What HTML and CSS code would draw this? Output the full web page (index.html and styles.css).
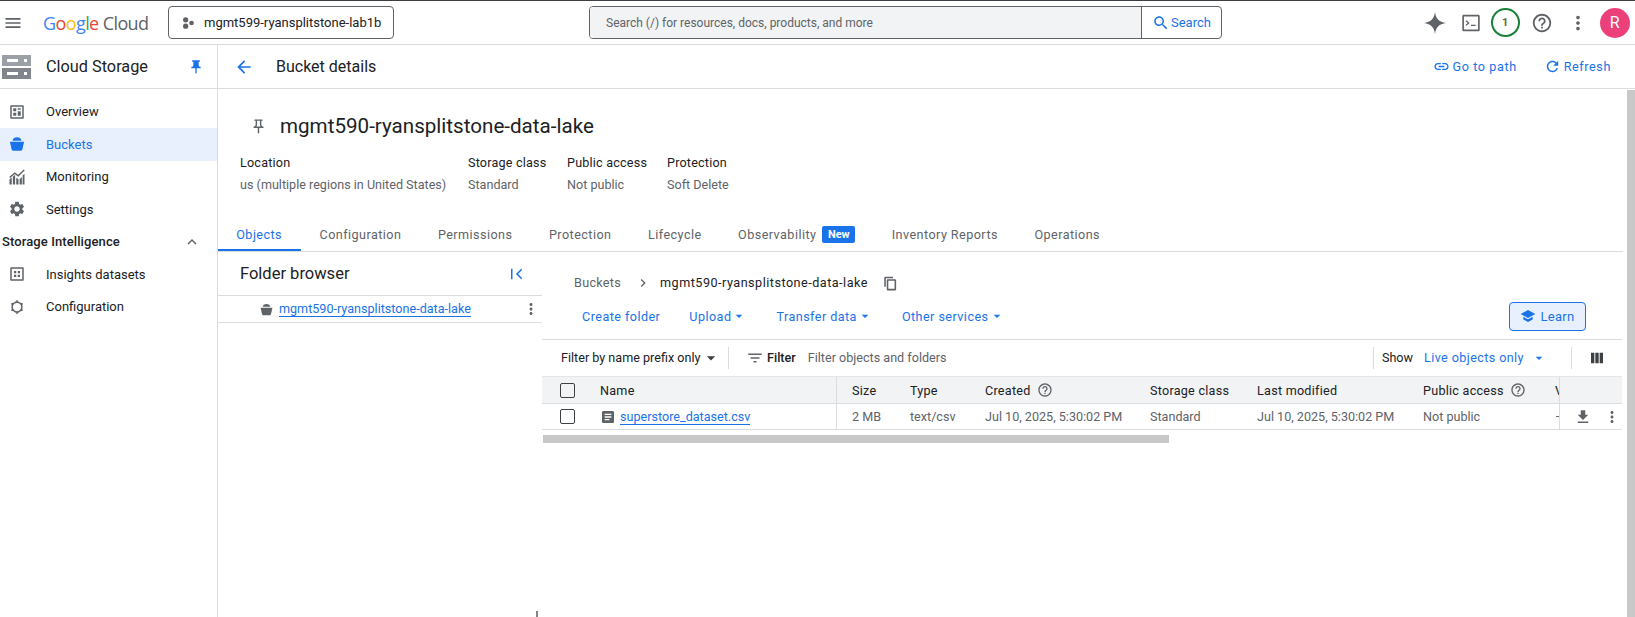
FILE: index.html

```html
<!DOCTYPE html>
<html lang="en">
<head>
  <meta charset="UTF-8" />
  <title>Bucket details - Cloud Storage</title>
  <link rel="stylesheet" href="styles.css">
</head>
<body>
  <svg class="sprite" xmlns="http://www.w3.org/2000/svg">
    <symbol id="i-menu" viewBox="0 0 24 24"><path d="M3 18h18v-2H3v2zm0-5h18v-2H3v2zm0-7v2h18V6H3z"/></symbol>
    <symbol id="i-pin" viewBox="0 0 24 24"><path d="M16 9V4h1c.55 0 1-.45 1-1s-.45-1-1-1H7c-.55 0-1 .45-1 1s.45 1 1 1h1v5c0 1.66-1.34 3-3 3v2h5.97v7l1 1 1-1v-7H19v-2c-1.66 0-3-1.34-3-3z"/></symbol>
    <symbol id="i-pin-line" viewBox="0 0 24 24"><path d="M14 4v5c0 1.12.37 2.16 1 3H9c.65-.86 1-1.9 1-3V4h4m3-2H7c-.55 0-1 .45-1 1s.45 1 1 1h1v5c0 1.66-1.34 3-3 3v2h5.97v7l1 1 1-1v-7H19v-2c-1.66 0-3-1.34-3-3V4h1c.55 0 1-.45 1-1s-.45-1-1-1z"/></symbol>
    <symbol id="i-back" viewBox="0 0 24 24"><path d="M20 11H7.83l5.59-5.59L12 4l-8 8 8 8 1.41-1.41L7.83 13H20v-2z"/></symbol>
    <symbol id="i-search" viewBox="0 0 24 24"><path d="M15.5 14h-.79l-.28-.27C15.41 12.59 16 11.11 16 9.5 16 5.91 13.09 3 9.5 3S3 5.91 3 9.5 5.91 16 9.5 16c1.61 0 3.09-.59 4.23-1.57l.27.28v.79l5 4.99L20.49 19l-4.99-5zm-6 0C7.01 14 5 11.99 5 9.5S7.01 5 9.5 5 14 7.01 14 9.5 11.99 14 9.5 14z"/></symbol>
    <symbol id="i-help" viewBox="0 0 24 24"><path d="M11 18h2v-2h-2v2zm1-16C6.48 2 2 6.48 2 12s4.48 10 10 10 10-4.48 10-10S17.52 2 12 2zm0 18c-4.41 0-8-3.59-8-8s3.59-8 8-8 8 3.59 8 8-3.59 8-8 8zm0-14c-2.21 0-4 1.79-4 4h2c0-1.1.9-2 2-2s2 .9 2 2c0 2-3 1.75-3 5h2c0-2.25 3-2.5 3-5 0-2.21-1.79-4-4-4z"/></symbol>
    <symbol id="i-more" viewBox="0 0 24 24"><path d="M12 8c1.1 0 2-.9 2-2s-.9-2-2-2-2 .9-2 2 .9 2 2 2zm0 2c-1.1 0-2 .9-2 2s.9 2 2 2 2-.9 2-2-.9-2-2-2zm0 6c-1.1 0-2 .9-2 2s.9 2 2 2 2-.9 2-2-.9-2-2-2z"/></symbol>
    <symbol id="i-link" viewBox="0 0 24 24"><path d="M3.9 12c0-1.71 1.39-3.1 3.1-3.1h4V7H7c-2.76 0-5 2.24-5 5s2.24 5 5 5h4v-1.9H7c-1.71 0-3.1-1.39-3.1-3.1zM8 13h8v-2H8v2zm9-6h-4v1.9h4c1.71 0 3.1 1.39 3.1 3.1s-1.39 3.1-3.1 3.1h-4V17h4c2.76 0 5-2.24 5-5s-2.24-5-5-5z"/></symbol>
    <symbol id="i-refresh" viewBox="0 0 24 24"><path d="M17.65 6.35C16.2 4.9 14.21 4 12 4c-4.42 0-7.99 3.58-7.99 8s3.57 8 7.99 8c3.73 0 6.84-2.55 7.73-6h-2.08c-.82 2.33-3.04 4-5.65 4-3.31 0-6-2.69-6-6s2.69-6 6-6c1.66 0 3.14.69 4.22 1.78L13 11h7V4l-2.35 2.35z"/></symbol>
    <symbol id="i-settings" viewBox="0 0 24 24"><path d="M19.14 12.94c.04-.3.06-.61.06-.94 0-.32-.02-.64-.07-.94l2.03-1.58c.18-.14.23-.41.12-.61l-1.92-3.32c-.12-.22-.37-.29-.59-.22l-2.39.96c-.5-.38-1.03-.7-1.62-.94l-.36-2.54c-.04-.24-.24-.41-.48-.41h-3.84c-.24 0-.43.17-.47.41l-.36 2.54c-.59.24-1.13.57-1.62.94l-2.39-.96c-.22-.08-.47 0-.59.22L2.74 8.87c-.12.21-.08.47.12.61l2.03 1.58c-.05.3-.09.63-.09.94s.02.64.07.94l-2.03 1.58c-.18.14-.23.41-.12.61l1.92 3.32c.12.22.37.29.59.22l2.39-.96c.5.38 1.03.7 1.62.94l.36 2.54c.05.24.24.41.48.41h3.84c.24 0 .44-.17.47-.41l.36-2.54c.59-.24 1.13-.56 1.62-.94l2.39.96c.22.08.47 0 .59-.22l1.92-3.32c.12-.22.07-.47-.12-.61l-2.01-1.58zM12 15.6c-1.98 0-3.6-1.62-3.6-3.6s1.62-3.6 3.6-3.6 3.6 1.62 3.6 3.6-1.62 3.6-3.6 3.6z"/></symbol>
    <symbol id="i-config" viewBox="0 0 24 24"><path fill-rule="evenodd" d="M12 4.500a7.500 7.500 0 1 1 0 15 7.500 7.500 0 0 1 0-15zM12 6.500a5.500 5.500 0 1 0 0 11 5.500 5.500 0 0 0 0-11z"/><path d="M12 2.500l2.500 2.500h-5zM12 21.500l-2.500-2.500h5zM3.800 7.200l3.400-.9-1.300 4.200zM20.200 7.200l-3.400-.9 1.300 4.200zM3.800 16.800l3.400.9-1.300-4.200zM20.200 16.800l-3.400.9 1.300-4.200z"/></symbol>
    <symbol id="i-copy" viewBox="0 0 24 24"><path d="M16 1H4c-1.100 0-2 .9-2 2v14h2.500V3.500H16V1zm3 4H8c-1.100 0-2 .9-2 2v14c0 1.100.9 2 2 2h11c1.100 0 2-.9 2-2V7c0-1.100-.9-2-2-2zm-.5 15.500h-10v-13h10v13z"/></symbol>
    <symbol id="i-download" viewBox="0 0 24 24"><path d="M19 9h-4V3H9v6H5l7 7 7-7zM5 18v2h14v-2H5z"/></symbol>
    <symbol id="i-filter" viewBox="0 0 24 24"><path d="M10 18h4v-2h-4v2zM3 6v2h18V6H3zm3 7h12v-2H6v2z"/></symbol>
    <symbol id="i-school" viewBox="0 0 24 24"><path d="M5 13.180v4L12 21l7-3.820v-4L12 17l-7-3.820zM12 3L1 9l11 6 11-6L12 3z"/></symbol>
    <symbol id="i-columns" viewBox="0 0 24 24"><path d="M3 4h5v16H3zM9.500 4h5v16h-5zM16 4h5v16h-5z"/></symbol>
    <symbol id="i-less" viewBox="0 0 24 24"><path d="M12 8l-6 6 1.410 1.410L12 10.830l4.590 4.580L18 14z"/></symbol>
    <symbol id="i-file" viewBox="0 0 24 24"><path d="M19 3H5c-1.100 0-2 .9-2 2v14c0 1.100.9 2 2 2h14c1.100 0 2-.9 2-2V5c0-1.100-.9-2-2-2zm-5 14H7v-2h7v2zm3-4H7v-2h10v2zm0-4H7V7h10v2z"/></symbol>
    <symbol id="i-bucket" viewBox="0 0 24 24"><path d="M6 7.500C6.600 4.500 8.500 3 12 3s5.400 1.500 6 4.500zM2.500 9h19l-2.300 10c-.3 1.300-1.200 2-2.400 2H7.200c-1.200 0-2.100-.7-2.400-2z"/></symbol>
    <symbol id="i-overview" viewBox="0 0 24 24"><path d="M4 3h16c.6 0 1 .4 1 1v16c0 .6-.4 1-1 1H4c-.6 0-1-.4-1-1V4c0-.6.4-1 1-1zm1 2v14h14V5H5zm2 2h4v4H7zm6 0h4v2h-4zm0 4h4v6h-4zm-6 2h4v4H7z" fill-rule="evenodd"/></symbol>
    <symbol id="i-monitor" viewBox="0 0 24 24"><path d="M2 22v-7l3-2.500V22zm4.500 0V11.500l3-2.500v13zm4.500 0v-9l3 2v7zm4.500 0v-7l3-3v10zm4 0V10l2.500-2.500V22zM1.500 12L9 5.500l4.500 3.500 7.500-7 1.300 1.300-8.700 8.200L9 8 3 13.300z"/></symbol>
    <symbol id="i-insights" viewBox="0 0 24 24"><path d="M4 3h16c.6 0 1 .4 1 1v16c0 .6-.4 1-1 1H4c-.6 0-1-.4-1-1V4c0-.6.4-1 1-1zm1 2v14h14V5H5zm3 3h3v3H8zm5 0h3v3h-3zm-5 5h3v3H8zm5 0h3v3h-3z" fill-rule="evenodd"/></symbol>
    <symbol id="i-spark" viewBox="0 0 24 24"><path d="M12 1c.9 6.800 4.200 10.100 11 11-6.800.9-10.100 4.200-11 11-.9-6.800-4.200-10.100-11-11 6.800-.9 10.100-4.200 11-11z"/></symbol>
    <symbol id="i-terminal" viewBox="0 0 24 24"><path d="M4 3h16c.8 0 1.500.7 1.500 1.500v15c0 .8-.7 1.500-1.500 1.500H4c-.8 0-1.500-.7-1.500-1.500v-15C2.500 3.700 3.200 3 4 3zm.3 1.800v14.400h15.400V4.800zM7 9l3.500 3L7 15l-.9-1 2.300-2-2.300-2zm5 5h5v1.400h-5z" fill-rule="evenodd"/></symbol>
    <symbol id="i-project" viewBox="0 0 24 24"><circle cx="8" cy="6.500" r="4.500"/><circle cx="8" cy="17.500" r="4.500"/><circle cx="18" cy="12" r="4"/></symbol>
    <symbol id="i-collapse" viewBox="0 0 24 24"><path d="M4 5h2v14H4zM19 6.400L17.600 5l-7 7 7 7 1.400-1.400L13.400 12z"/></symbol>
    <symbol id="i-caret" viewBox="0 0 24 24"><path d="M7 10l5 5 5-5z"/></symbol>
  </svg>

  <header class="topbar">
    <svg class="icon icon-menu"><use href="#i-menu"/></svg>
    <div class="logo"><span class="g-blue">G</span><span class="g-red">o</span><span class="g-yellow">o</span><span class="g-blue">g</span><span class="g-green">l</span><span class="g-red">e</span> <span class="logo-cloud">Cloud</span></div>
    <button class="project-btn"><svg class="icon icon-project"><use href="#i-project"/></svg>mgmt599-ryansplitstone-lab1b</button>
    <div class="searchbox">
      <div class="search-input">Search (/) for resources, docs, products, and more</div>
      <div class="search-btn"><svg class="icon icon-search"><use href="#i-search"/></svg>Search</div>
    </div>
    <div class="top-icons">
      <svg class="icon icon-spark"><use href="#i-spark"/></svg>
      <svg class="icon top-icon icon-term"><use href="#i-terminal"/></svg>
      <div class="notif"><span>1</span></div>
      <svg class="icon top-icon"><use href="#i-help"/></svg>
      <svg class="icon top-icon"><use href="#i-more"/></svg>
      <div class="avatar">R</div>
    </div>
  </header>

  <div class="layout">
    <aside class="sidebar">
      <div class="side-head">
        <svg class="storage-logo" viewBox="0 0 29 24">
          <rect x="0" y="0" width="29" height="11" fill="#9aa0a6"/>
          <rect x="0" y="13" width="29" height="11" fill="#80868b"/>
          <rect x="5" y="4" width="11" height="3" fill="#fff"/>
          <rect x="22" y="4" width="3" height="3" fill="#fff"/>
          <rect x="5" y="17" width="11" height="3" fill="#fff"/>
          <rect x="22" y="17" width="3" height="3" fill="#fff"/>
        </svg>
        <span class="side-title">Cloud Storage</span>
        <svg class="icon icon-sidepin"><use href="#i-pin"/></svg>
      </div>
      <nav class="side-nav">
        <a class="nav-item"><svg class="icon"><use href="#i-overview"/></svg>Overview</a>
        <a class="nav-item active"><svg class="icon"><use href="#i-bucket"/></svg>Buckets</a>
        <a class="nav-item"><svg class="icon"><use href="#i-monitor"/></svg>Monitoring</a>
        <a class="nav-item"><svg class="icon"><use href="#i-settings"/></svg>Settings</a>
        <div class="nav-group">Storage Intelligence<svg class="icon"><use href="#i-less"/></svg></div>
        <a class="nav-item"><svg class="icon"><use href="#i-insights"/></svg>Insights datasets</a>
        <a class="nav-item"><svg class="icon"><use href="#i-config"/></svg>Configuration</a>
      </nav>
    </aside>

    <div class="main">
      <div class="page-head">
        <svg class="icon icon-back"><use href="#i-back"/></svg>
        <span class="page-title">Bucket details</span>
        <a class="head-link"><svg class="icon"><use href="#i-link"/></svg>Go to path</a>
        <a class="head-link"><svg class="icon"><use href="#i-refresh"/></svg>Refresh</a>
      </div>

      <div class="main-body">
        <div class="content">
          <div class="bucket-title">
            <svg class="icon"><use href="#i-pin-line"/></svg>
            <h1>mgmt590-ryansplitstone-data-lake</h1>
          </div>
          <div class="meta">
            <div class="meta-col meta-location"><b>Location</b><span>us (multiple regions in United States)</span></div>
            <div class="meta-col meta-class"><b>Storage class</b><span>Standard</span></div>
            <div class="meta-col meta-access"><b>Public access</b><span>Not public</span></div>
            <div class="meta-col"><b>Protection</b><span>Soft Delete</span></div>
          </div>

          <div class="tabs">
            <a class="tab active">Objects</a>
            <a class="tab">Configuration</a>
            <a class="tab">Permissions</a>
            <a class="tab">Protection</a>
            <a class="tab">Lifecycle</a>
            <a class="tab">Observability<span class="badge">New</span></a>
            <a class="tab">Inventory Reports</a>
            <a class="tab">Operations</a>
          </div>

          <div class="browser">
            <div class="folders">
              <div class="folders-head">
                <span>Folder browser</span>
                <svg class="icon"><use href="#i-collapse"/></svg>
              </div>
              <div class="folder-row">
                <svg class="icon icon-bucket"><use href="#i-bucket"/></svg>
                <a class="link">mgmt590-ryansplitstone-data-lake</a>
                <svg class="icon icon-more"><use href="#i-more"/></svg>
              </div>
            </div>

            <div class="objects">
              <div class="crumbs">
                <span class="crumb-root">Buckets</span>
                <svg class="crumb-sep" viewBox="0 0 24 24"><path d="M8.590 16.590L13.170 12 8.590 7.410 10 6l6 6-6 6z"/></svg>
                <span class="crumb-name">mgmt590-ryansplitstone-data-lake</span>
                <svg class="icon icon-copy"><use href="#i-copy"/></svg>
              </div>

              <div class="actions">
                <a class="action">Create folder</a>
                <a class="action">Upload<svg class="caret"><use href="#i-caret"/></svg></a>
                <a class="action">Transfer data<svg class="caret"><use href="#i-caret"/></svg></a>
                <a class="action">Other services<svg class="caret"><use href="#i-caret"/></svg></a>
                <button class="learn"><svg class="icon"><use href="#i-school"/></svg>Learn</button>
              </div>

              <div class="filters">
                <span class="prefix">Filter by name prefix only<svg class="caret caret-big"><use href="#i-caret"/></svg></span>
                <svg class="icon icon-filter"><use href="#i-filter"/></svg>
                <b class="filter-label">Filter</b>
                <span class="filter-hint">Filter objects and folders</span>
                <span class="show">Show</span>
                <span class="live">Live objects only<svg class="caret"><use href="#i-caret"/></svg></span>
                <svg class="icon icon-columns"><use href="#i-columns"/></svg>
              </div>

              <div class="tbl-row tbl-head">
                <div class="cell-check"><span class="checkbox"></span></div>
                <div class="cell cell-name">Name</div>
                <div class="cell">Size</div>
                <div class="cell">Type</div>
                <div class="cell">Created<svg class="icon icon-tip"><use href="#i-help"/></svg></div>
                <div class="cell">Storage class</div>
                <div class="cell">Last modified</div>
                <div class="cell">Public access<svg class="icon icon-tip"><use href="#i-help"/></svg></div>
                <div class="cell cell-clip">V</div>
                <div class="cell-actions"></div>
              </div>
              <div class="tbl-row tbl-data">
                <div class="cell-check"><span class="checkbox"></span></div>
                <div class="cell cell-name"><svg class="icon icon-file"><use href="#i-file"/></svg><a class="link">superstore_dataset.csv</a></div>
                <div class="cell">2 MB</div>
                <div class="cell">text/csv</div>
                <div class="cell">Jul 10, 2025, 5:30:02 PM</div>
                <div class="cell">Standard</div>
                <div class="cell">Jul 10, 2025, 5:30:02 PM</div>
                <div class="cell">Not public</div>
                <div class="cell cell-clip">–</div>
                <div class="cell-actions">
                  <svg class="icon"><use href="#i-download"/></svg>
                  <svg class="icon"><use href="#i-more"/></svg>
                </div>
              </div>
              <div class="hscroll"></div>
            </div>
          </div>
        </div>
        <div class="vscroll"></div>
      </div>
    </div>
  </div>
  <div class="text-cursor"></div>
</body>
</html>
```

FILE: styles.css

```css
html, body {
  margin: 0;
  padding: 0;
  height: 100%;
  overflow: hidden;
  background: #fff;
  color: #202124;
  font-family: Roboto, Arial, sans-serif;
  font-size: 12.6px;
  white-space: nowrap;
}

.sprite {
  display: none;
}

.icon {
  width: 18px;
  height: 18px;
  fill: #5f6368;
  flex: none;
}

.caret {
  width: 16px;
  height: 16px;
  fill: currentColor;
  flex: none;
}

.link {
  color: #1a73e8;
  border-bottom: 1px solid #1a73e8;
}

/* top bar */
.topbar {
  display: flex;
  align-items: center;
  height: 43px;
  border-top: 1px solid #3c4043;
  border-bottom: 1px solid #dadce0;
}

.icon-menu {
  width: 20px;
  height: 20px;
  margin-left: 3px;
}

.logo {
  width: 125px;
  margin-left: 20px;
  font-family: "Open Sans", sans-serif;
  font-size: 18px;
  letter-spacing: -0.6px;
}

.g-blue { color: #4285f4; }
.g-red { color: #ea4335; }
.g-yellow { color: #fbbc04; }
.g-green { color: #34a853; }
.logo-cloud { color: #5f6368; }

.project-btn {
  display: flex;
  align-items: center;
  gap: 9px;
  width: 226px;
  height: 33px;
  padding: 0 12px;
  background: #fff;
  border: 1px solid #5f6368;
  border-radius: 4px;
  color: #202124;
  font: 13px Roboto, Arial, sans-serif;
}

.icon-project {
  width: 14px;
  height: 14px;
}

.searchbox {
  display: flex;
  width: 633px;
  height: 33px;
  margin-left: 195px;
  border: 1px solid #5f6368;
  border-radius: 4px;
  box-sizing: border-box;
}

.search-input {
  flex: 1;
  display: flex;
  align-items: center;
  padding-left: 16px;
  background: #f1f3f4;
  border-radius: 3px 0 0 3px;
  color: #5f6368;
  font-size: 12px;
}

.search-btn {
  display: flex;
  align-items: center;
  gap: 1px;
  width: 80px;
  padding-left: 10px;
  box-sizing: border-box;
  border-left: 1px solid #5f6368;
  color: #1a73e8;
  font-size: 13px;
}

.icon-search {
  fill: #1a73e8;
}

.top-icons {
  display: grid;
  grid-auto-flow: column;
  grid-auto-columns: 36.5px;
  align-items: center;
  justify-items: center;
  margin-left: auto;
  margin-right: 2px;
}

.top-icon {
  width: 22px;
  height: 22px;
}

.icon-spark {
  width: 24px;
  height: 24px;
  margin-left: 6px;
}

.icon-term {
  margin-left: 4px;
}

.notif {
  display: flex;
  align-items: center;
  justify-content: center;
  width: 29px;
  height: 29px;
  box-sizing: border-box;
  border: 2px solid #188038;
  border-radius: 50%;
  font-size: 11px;
  font-weight: 700;
  color: #5f6b1e;
}

.avatar {
  display: flex;
  align-items: center;
  justify-content: center;
  width: 30px;
  height: 30px;
  border-radius: 50%;
  background: #ec407a;
  color: #fff;
  font-size: 16px;
}

/* layout */
.layout {
  display: flex;
  height: 572px;
}

.sidebar {
  width: 217px;
  flex: none;
  border-right: 1px solid #dadce0;
  font-size: 13px;
}

.side-head {
  display: flex;
  align-items: center;
  height: 43px;
  border-bottom: 1px solid #dadce0;
}

.storage-logo {
  width: 29px;
  height: 24px;
  margin-left: 2px;
}

.side-title {
  margin-left: 15px;
  font-size: 16.3px;
}

.icon-sidepin {
  width: 16px;
  height: 16px;
  margin-left: auto;
  margin-right: 13px;
  fill: #1a73e8;
}

.side-nav {
  padding-top: 6.6px;
}

.nav-item {
  display: flex;
  align-items: center;
  gap: 20px;
  height: 32.5px;
  padding-left: 8px;
}

.nav-item.active {
  background: #e8f0fe;
  color: #1a73e8;
}

.nav-item.active .icon {
  fill: #1a73e8;
}

.nav-group {
  display: flex;
  align-items: center;
  justify-content: space-between;
  height: 32.5px;
  padding: 0 16px 0 2px;
  font-weight: 500;
  letter-spacing: 0.1px;
}

.main {
  flex: 1;
  min-width: 0;
  display: flex;
  flex-direction: column;
}

.page-head {
  display: flex;
  align-items: center;
  flex: none;
  height: 43px;
  padding-right: 24px;
  border-bottom: 1px solid #dadce0;
}

.icon-back {
  width: 20px;
  height: 20px;
  margin-left: 16px;
  fill: #1a73e8;
}

.page-title {
  margin-left: 22px;
  margin-right: auto;
  font-size: 16px;
}

.head-link {
  display: flex;
  align-items: center;
  gap: 3px;
  margin-left: 27px;
  color: #1a73e8;
  letter-spacing: 0.6px;
}

.head-link .icon {
  width: 17px;
  height: 17px;
  fill: #1a73e8;
}

.main-body {
  flex: 1;
  display: flex;
  min-height: 0;
}

.content {
  width: 1405px;
  flex: none;
}

.vscroll {
  width: 8px;
  margin-left: 4px;
  margin-top: 1px;
  background: #c8c8c8;
}

/* bucket header */
.bucket-title {
  display: flex;
  align-items: center;
  gap: 13px;
  height: 26px;
  padding: 24px 0 0 32px;
}

.bucket-title .icon {
  width: 17px;
  height: 17px;
}

.bucket-title h1 {
  margin: 0;
  font-size: 20.6px;
  font-weight: 400;
}

.meta {
  display: flex;
  padding: 13px 0 0 22px;
}

.meta-col {
  display: flex;
  flex-direction: column;
  line-height: 21.5px;
}

.meta-col b {
  font-weight: 400;
  letter-spacing: 0.2px;
}

.meta-col span {
  color: #5f6368;
}

.meta-location { width: 228px; }
.meta-class { width: 99px; }
.meta-access { width: 100px; }

/* tabs */
.tabs {
  display: flex;
  align-items: stretch;
  height: 33px;
  margin-top: 23px;
  border-bottom: 1px solid #dadce0;
  letter-spacing: 0.45px;
  color: #5f6368;
}

.tab {
  display: flex;
  align-items: center;
  padding: 0 18.25px;
}

.tab.active {
  padding-right: 19.25px;
  color: #1a73e8;
  box-shadow: inset 0 -2px 0 #1a73e8;
}

.badge {
  margin-left: 6px;
  padding: 2px 5.5px;
  background: #1a73e8;
  border-radius: 2px;
  color: #fff;
  font-size: 11px;
  font-weight: 700;
  letter-spacing: 0;
}

/* folder browser */
.browser {
  display: flex;
}

.folders {
  width: 324px;
  flex: none;
}

.folders-head {
  display: flex;
  align-items: center;
  justify-content: space-between;
  height: 43px;
  padding: 0 16px 0 22px;
  border-bottom: 1px solid #dadce0;
  font-size: 16.5px;
}

.folders-head .icon {
  fill: #1a73e8;
}

.folder-row {
  display: flex;
  align-items: center;
  height: 26px;
  padding: 0 2px 0 41px;
  border-bottom: 1px solid #dadce0;
}

.icon-bucket {
  width: 15px;
  height: 15px;
  margin-right: 5px;
}

.icon-more {
  margin-left: auto;
}

/* objects panel */
.objects {
  width: 1080px;
  flex: none;
}

.crumbs {
  display: flex;
  align-items: center;
  height: 21px;
  padding: 20px 0 0 32px;
}

.crumb-root {
  color: #5f6368;
  letter-spacing: 0.3px;
}

.crumb-sep {
  width: 16px;
  height: 16px;
  margin: 0 9px 0 14px;
  fill: #5f6368;
}

.crumb-name {
  letter-spacing: 0.5px;
}

.icon-copy {
  width: 15px;
  height: 15px;
  margin-left: 15px;
  margin-top: 2px;
}

.actions {
  display: flex;
  align-items: center;
  height: 32px;
  margin-top: 7px;
  padding: 0 36px 7px 40px;
  border-bottom: 1px solid #dadce0;
}

.action {
  display: flex;
  align-items: center;
  margin-right: 29px;
  color: #1a73e8;
  letter-spacing: 0.45px;
}

.learn {
  display: flex;
  align-items: center;
  justify-content: center;
  gap: 4px;
  width: 77px;
  height: 29px;
  margin-left: auto;
  background: #e8f0fe;
  border: 1px solid #1a73e8;
  border-radius: 4px;
  color: #1a73e8;
  font: 13px Roboto, Arial, sans-serif;
  letter-spacing: 0.3px;
}

.learn .icon {
  width: 16px;
  height: 16px;
  fill: #1a73e8;
}

.filters {
  display: flex;
  align-items: center;
  height: 35px;
  padding: 0 0 1px 19px;
}

.prefix {
  display: flex;
  align-items: center;
  gap: 1px;
  width: 167px;
  height: 22px;
  margin-right: 17px;
  border-right: 1px solid #dadce0;
}

.caret-big {
  width: 20px;
  height: 20px;
  fill: #3c4043;
}

.icon-filter {
  margin-right: 3px;
}

.filter-label {
  font-weight: 500;
}

.filter-hint {
  margin-left: 12px;
  color: #5f6368;
}

.show {
  margin-left: auto;
  height: 22px;
  line-height: 22px;
  padding-left: 8px;
  border-left: 1px solid #dadce0;
}

.live {
  display: flex;
  align-items: center;
  gap: 7px;
  width: 147px;
  height: 22px;
  margin-left: 11px;
  margin-right: 17px;
  color: #1a73e8;
  letter-spacing: 0.4px;
  border-right: 1px solid #dadce0;
}

.icon-columns {
  width: 16px;
  height: 16px;
  margin-right: 17px;
  fill: #3c4043;
}

/* table */
.tbl-row {
  display: grid;
  grid-template-columns: 58px 237px 58px 75px 165px 107px 166px 132px 19px 63px;
  border-bottom: 1px solid #dadce0;
}

.tbl-row > div {
  display: flex;
  align-items: center;
}

.tbl-head {
  height: 28px;
  background: #f1f3f4;
  border-top: 1px solid #e3e5e8;
  box-sizing: border-box;
  letter-spacing: 0.25px;
}

.tbl-data {
  height: 25px;
  color: #5f6368;
}

.cell {
  padding-left: 15px;
}

.cell-check {
  padding-left: 18px;
}

.cell-name {
  border-right: 1px solid #dadce0;
}

.tbl-head .cell-name {
  color: #202124;
  padding-left: 0;
}

.tbl-data .cell-name {
  padding-left: 0;
}

.cell-clip {
  overflow: hidden;
}

.cell-actions {
  justify-content: space-between;
  padding: 0 1px 0 14px;
  box-sizing: border-box;
  border-left: 1px solid #dadce0;
}

.checkbox {
  display: block;
  width: 15px;
  height: 15px;
  box-sizing: border-box;
  border: 1.5px solid #3c4043;
  border-radius: 2px;
}

.icon-tip {
  width: 16px;
  height: 16px;
  margin-left: 6px;
}

.icon-file {
  width: 16px;
  height: 16px;
  margin-right: 4px;
}

.hscroll {
  width: 626px;
  height: 8px;
  margin: 5px 0 0 1px;
  background: #c8c8c8;
}

.text-cursor {
  position: absolute;
  left: 536px;
  top: 611px;
  width: 2px;
  height: 6px;
  background: #80868b;
}
```
